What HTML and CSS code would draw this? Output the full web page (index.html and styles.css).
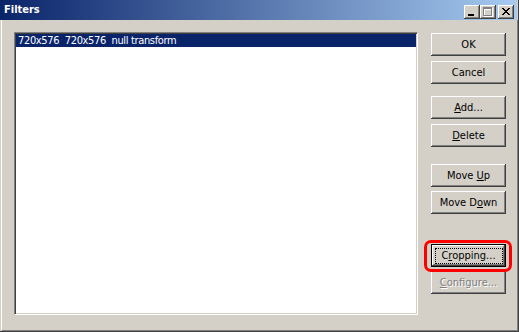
FILE: index.html
```html
<!DOCTYPE html>
<html lang="en">

<head>
  <meta charset="UTF-8">
  <title>Filters</title>
  <link rel="stylesheet" href="styles.css">
</head>

<body>
  <div class="window">
    <div class="titlebar">
      <span class="title">Filters</span>
      <div class="caption-buttons">
        <span class="cap-btn">
          <svg width="16" height="14" viewBox="0 0 16 14"><path d="M4 9h6v2h-6z" fill="#000"/></svg>
        </span>
        <span class="cap-btn">
          <svg width="16" height="14" viewBox="0 0 16 14">
            <path d="M4 3h9v9h-9z M5 5h7v6h-7z" fill="#fff" fill-rule="evenodd"/>
            <path d="M3 2h9v9h-9z M4 4h7v6h-7z" fill="#808080" fill-rule="evenodd"/>
          </svg>
        </span>
        <span class="cap-btn close">
          <svg width="16" height="14" viewBox="0 0 16 14"><path d="M4 3h2v1h-2z M10 3h2v1h-2z M5 4h2v1h-2z M9 4h2v1h-2z M6 5h4v1h-4z M7 6h2v1h-2z M6 7h4v1h-4z M5 8h2v1h-2z M9 8h2v1h-2z M4 9h2v1h-2z M10 9h2v1h-2z" fill="#000"/></svg>
        </span>
      </div>
    </div>

    <div class="client">
      <div class="listbox">
        <div class="row selected">720x576&nbsp; 720x576&nbsp; null transform</div>
      </div>

      <div class="buttons">
        <button class="btn btn-ok">OK</button>
        <button class="btn btn-cancel">Cancel</button>
        <button class="btn btn-add"><u>A</u>dd...</button>
        <button class="btn btn-delete"><u>D</u>elete</button>
        <button class="btn btn-up">Move <u>U</u>p</button>
        <button class="btn btn-down">Move D<u>o</u>wn</button>
        <div class="highlight">
          <button class="btn default">C<u>r</u>opping...</button>
          <div class="ring"></div>
        </div>
        <button class="btn btn-configure" disabled><u>C</u>onfigure...</button>
      </div>
    </div>
  </div>
</body>

</html>
```

FILE: styles.css
```css
body {
  margin: 0;
}

.window {
  width: 519px;
  height: 332px;
  box-sizing: border-box;
  display: flex;
  flex-direction: column;
  background: #d4d0c8;
  border-right: 1px solid #404040;
  border-bottom: 1px solid #404040;
  font-family: "DejaVu Sans Condensed", "Liberation Sans", sans-serif;
  font-stretch: condensed;
  font-size: 11px;
}

.titlebar {
  height: 20px;
  margin-right: 1px;
  display: flex;
  align-items: flex-start;
  justify-content: space-between;
  padding-right: 3px;
  background: linear-gradient(to right, #0a246a, #a6caf0);
}

.title {
  color: #fff;
  font-weight: bold;
  padding: 3px 0 0 4px;
  line-height: 14px;
}

.caption-buttons {
  display: flex;
  margin-top: 5px;
}

.cap-btn {
  width: 16px;
  height: 14px;
  background: #d4d0c8;
  box-shadow: inset -1px -1px #404040, inset 1px 1px #fff, inset -2px -2px #808080;
}

.cap-btn svg {
  display: block;
}

.cap-btn.close {
  margin-left: 2px;
}

.client {
  flex: 1;
  display: flex;
  gap: 13px;
  margin-left: 1px;
  padding: 12px 11px 15px 12px;
  border-left: 1px solid #fff;
  border-right: 1px solid #808080;
  border-bottom: 1px solid #808080;
}

.listbox {
  width: 404px;
  height: 283px;
  box-sizing: border-box;
  background: #fff;
  border: 1px solid;
  border-color: #808080 #fff #fff #808080;
  box-shadow: inset 1px 1px #404040, inset -1px -1px #d4d0c8;
  padding: 1px;
}

.row {
  height: 13px;
  line-height: 13px;
  padding-left: 2px;
  white-space: nowrap;
  letter-spacing: -0.35px;
}

.row.selected {
  background: #0a246a;
  color: #fff;
}

.buttons {
  display: flex;
  flex-direction: column;
  padding-top: 1px;
}

.btn {
  width: 75px;
  height: 23px;
  box-sizing: border-box;
  padding: 0;
  border: none;
  background: #d4d0c8;
  color: #000;
  font: inherit;
  box-shadow: inset -1px -1px #404040, inset 1px 1px #fff, inset -2px -2px #808080, inset 2px 2px #d4d0c8;
}

.btn-cancel { margin-top: 5px; }
.btn-add { margin-top: 12px; }
.btn-delete { margin-top: 5px; }
.btn-up { margin-top: 17px; }
.btn-down { margin-top: 4px; }
.btn-configure { margin-top: 4px; }

.btn:disabled {
  color: #808080;
  text-shadow: 1px 1px #fff;
}

.highlight {
  position: relative;
  margin-top: 30px;
}

.btn.default {
  position: relative;
  display: block;
  box-shadow: inset 0 0 0 1px #000, inset -2px -2px #404040, inset 2px 2px #fff, inset -3px -3px #808080;
}

.btn.default::after {
  content: "";
  position: absolute;
  top: 4px;
  left: 4px;
  right: 3px;
  bottom: 3px;
  border: 1px dotted #000;
}

.ring {
  position: absolute;
  top: -4px;
  left: -7px;
  right: -6px;
  bottom: -5px;
  border: 3px solid #f00;
  border-radius: 7px;
}
```
